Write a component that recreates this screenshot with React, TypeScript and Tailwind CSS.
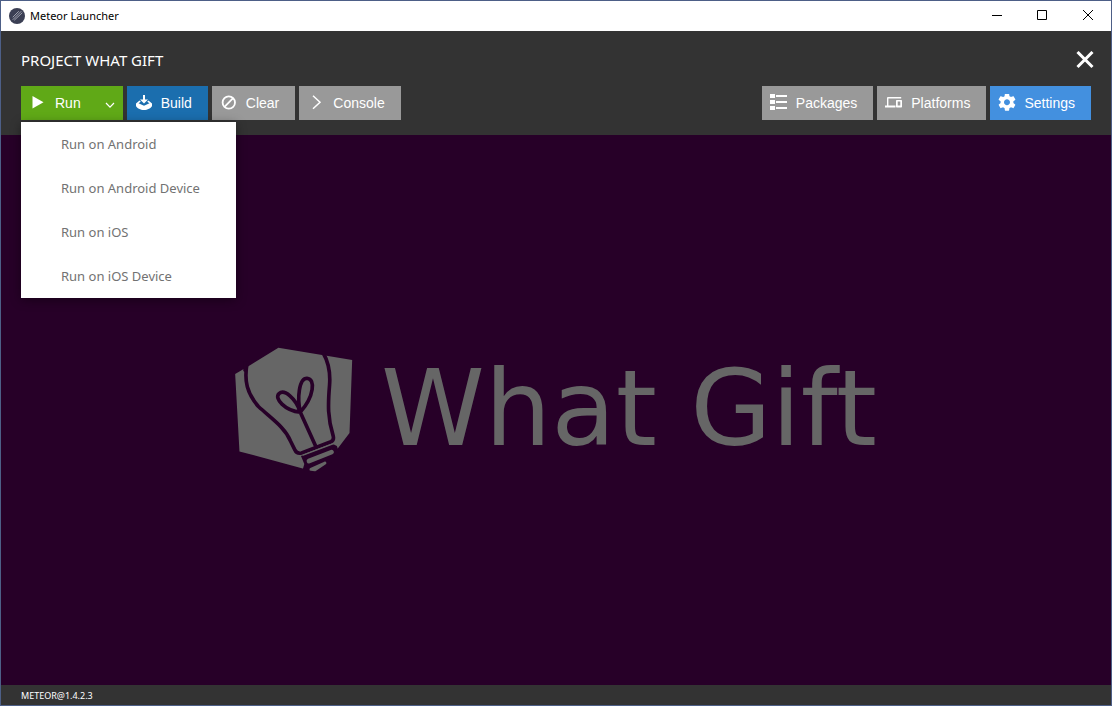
import type { ReactNode } from "react";

function MeteorIcon() {
  return (
    <svg className="size-4" viewBox="0 0 16 16" aria-hidden="true">
      <circle cx="8" cy="8" r="8" fill="#3b3f54" />
      <path d="M4 11.500 12 3.500M5.500 12 13 5M4 9 9.500 3.500" stroke="#a9abb8" strokeWidth=".9" strokeLinecap="round" />
    </svg>
  );
}

function PlayIcon() {
  return (
    <svg className="size-4.5" viewBox="0 0 18 18" fill="currentColor" aria-hidden="true">
      <path d="M3.500 2v12.500l11-6.200z" />
    </svg>
  );
}

function ChevronDownIcon() {
  return (
    <svg className="size-2.5" viewBox="0 0 10 10" fill="none" stroke="currentColor" strokeWidth="1.2" aria-hidden="true">
      <path d="M1 3 5 7.200 9 3" />
    </svg>
  );
}

function BuildIcon() {
  return (
    <svg className="size-4.5" viewBox="0 0 18 18" fill="currentColor" aria-hidden="true">
      <path d="M8 1h2v4.500h3L9 9.500l-4-4h3z" />
      <path d="M4.500 6.500 1 9.500v2.500c.8 2 4.500 4 8 4s7.200-2 8-4V9.500l-3.500-3-1.300 1.200 2.300 1.500L9 11.700 3.500 9.200l2.300-1.500z" />
    </svg>
  );
}

function ClearIcon() {
  return (
    <svg className="size-4.5" viewBox="0 0 18 18" fill="none" stroke="currentColor" strokeWidth="1.8" aria-hidden="true">
      <circle cx="8.800" cy="8.500" r="6.200" />
      <path d="M4.500 12.800 13.100 4.200" />
    </svg>
  );
}

function ConsoleIcon() {
  return (
    <svg className="size-4.5" viewBox="0 0 18 18" fill="none" stroke="currentColor" strokeWidth="1.500" aria-hidden="true">
      <path d="M6 1.700 13 8.200l-7 6.500" />
    </svg>
  );
}

function PackagesIcon() {
  return (
    <svg className="size-4.5" viewBox="0 0 18 18" fill="currentColor" aria-hidden="true">
      <path d="M0 0h5v4H0zM0 6h5v4H0zM0 12h5v4H0zM6 1h11v2H6zM6 7h11v2H6zM6 13h11v2H6z" />
    </svg>
  );
}

function PlatformsIcon() {
  return (
    <svg className="size-4.5" viewBox="0 0 18 18" fill="currentColor" aria-hidden="true">
      <path d="M3.400 4.500h12.800V3H3.200C2.400 3 2 3.500 2 4.200v7.300H0v2h10.500v-2H3.400z" />
      <path fillRule="evenodd" d="M11.700 6h4.600c.4 0 .7.300.7.700v6.100c0 .4-.3.700-.7.700h-4.600c-.4 0-.7-.3-.7-.7V6.700c0-.4.300-.7.700-.7zm1 1.500v4h2.600v-4z" />
    </svg>
  );
}

function SettingsIcon() {
  return (
    <svg className="size-4.5" viewBox="1.500 2.500 21 21" fill="currentColor" aria-hidden="true">
      <path d="M19.430 12.980c.04-.32.07-.64.07-.98s-.03-.66-.07-.98l2.110-1.650c.19-.15.24-.42.12-.64l-2-3.460c-.12-.22-.39-.3-.61-.22l-2.490 1c-.52-.4-1.080-.73-1.690-.98l-.38-2.650C14.460 2.180 14.250 2 14 2h-4c-.25 0-.46.18-.49.42l-.38 2.650c-.61.25-1.170.59-1.690.98l-2.490-1c-.23-.09-.49 0-.61.22l-2 3.460c-.13.22-.07.49.12.64l2.110 1.650c-.04.32-.07.65-.07.98s.03.66.07.98l-2.110 1.650c-.19.15-.24.42-.12.64l2 3.460c.12.22.39.3.61.22l2.490-1c.52.4 1.080.73 1.690.98l.38 2.650c.03.24.24.42.49.42h4c.25 0 .46-.18.49-.42l.38-2.650c.61-.25 1.170-.59 1.690-.98l2.490 1c.23.09.49 0 .61-.22l2-3.460c.12-.22.07-.49-.12-.64zM12 15.500c-1.930 0-3.500-1.570-3.500-3.500s1.570-3.500 3.500-3.500 3.500 1.570 3.500 3.500-1.570 3.500-3.500 3.500z" />
    </svg>
  );
}

function BulbLogo() {
  return (
    <svg className="h-[125px] w-[118px] shrink-0" viewBox="30 36 354 376" aria-hidden="true">
      <path d="M30 117 76 90 160 38 382 75 374 295 338 342 236 402 43 350z" fill="#666666" />
      <path d="M228 364 324 328 336 334 342 352 300 412H240L234 402 238 388z" fill="#270028" />
      <g fill="none" stroke="#270028" strokeWidth="11" strokeLinecap="round" strokeLinejoin="round">
        <path d="M66 84C56 138 66 176 100 215C140 252 180 278 196 318L210 346Q215 358 230 355L318 321Q328 316 325 304C308 250 309 210 314 150C317 110 312 84 295 54" />
        <path d="M272 334 226 232C216 190 222 130 246 130C272 132 268 184 226 232C180 228 146 190 162 176C178 162 212 190 226 232" />
        <path d="M60 84V106" />
      </g>
      <g fill="none" stroke="#666666" strokeLinecap="round" strokeLinejoin="round">
        <path d="M234 361 326 327" strokeWidth="4" />
        <path d="M252 379 320 352" strokeWidth="14" />
        <path d="M258 404 300 385 270 405z" fill="#666666" strokeWidth="9" />
      </g>
    </svg>
  );
}

type ToolButtonProps = {
  icon: ReactNode;
  label: string;
  color: string;
};

function ToolButton({ icon, label, color }: ToolButtonProps) {
  return (
    <button type="button" className={`flex h-[34px] items-center gap-2 pr-4 pl-2 font-['Liberation_Sans',sans-serif] text-sm text-white ${color}`}>
      {icon}
      {label}
    </button>
  );
}

const runTargets = ["Run on Android", "Run on Android Device", "Run on iOS", "Run on iOS Device"];

function RunMenu() {
  return (
    <div className="relative">
      <button
        type="button"
        aria-haspopup="menu"
        aria-expanded="true"
        className="flex h-[34px] items-center gap-2 bg-[#60a917] pr-2 pl-2 font-['Liberation_Sans',sans-serif] text-sm text-white"
      >
        <PlayIcon />
        Run
        <span className="mt-1 pl-4">
          <ChevronDownIcon />
        </span>
      </button>
      <ul role="menu" className="absolute top-9 left-0 z-10 w-[215px] bg-white shadow-[0_2px_10px_rgba(0,0,0,0.4)]">
        {runTargets.map((target) => (
          <li key={target} role="none">
            <button type="button" role="menuitem" className="block h-11 w-full pt-0.5 pl-10 text-left text-[13px] text-[#727272]">
              {target}
            </button>
          </li>
        ))}
      </ul>
    </div>
  );
}

function TitleBar() {
  return (
    <div className="flex h-[30px] items-center justify-between bg-white text-black">
      <div className="flex items-center gap-[5px] pl-2">
        <MeteorIcon />
        <span className="text-[11px]">Meteor Launcher</span>
      </div>
      <div className="flex h-full">
        <button type="button" aria-label="Minimize" className="flex w-[45px] items-center justify-center">
          <svg className="size-3" viewBox="0 0 12 12" stroke="currentColor" aria-hidden="true">
            <path d="M1 5.500h10" />
          </svg>
        </button>
        <button type="button" aria-label="Maximize" className="flex w-[46px] items-center justify-center">
          <svg className="size-3" viewBox="0 0 12 12" fill="none" stroke="currentColor" aria-hidden="true">
            <path d="M1.500 .5h9v9h-9z" />
          </svg>
        </button>
        <button type="button" aria-label="Close window" className="flex w-[46px] items-center justify-center">
          <svg className="size-3" viewBox="0 0 12 12" stroke="currentColor" aria-hidden="true">
            <path d="m1 0 10 10M11 0 1 10" />
          </svg>
        </button>
      </div>
    </div>
  );
}

export default function App() {
  return (
    <div className="flex min-h-screen flex-col border border-[#4d5f87] bg-[#270028] font-['Noto_Sans','Open_Sans',sans-serif]">
      <TitleBar />
      <header className="bg-[#333333] px-5 py-[15px]">
        <div className="flex h-7 items-center justify-between text-white">
          <h1 className="text-[15px]">PROJECT WHAT GIFT</h1>
          <button type="button" aria-label="Close project" className="-mr-1.5 flex size-6 items-center justify-center">
            <svg className="size-[18px]" viewBox="0 0 18 18" stroke="currentColor" strokeWidth="3" aria-hidden="true">
              <path d="m1.500 1 15 15M16.500 1l-15 15" />
            </svg>
          </button>
        </div>
        <div className="mt-3 flex justify-between">
          <div className="flex gap-1">
            <RunMenu />
            <ToolButton icon={<BuildIcon />} label="Build" color="bg-[#1b6eae]" />
            <ToolButton icon={<ClearIcon />} label="Clear" color="bg-[#999999]" />
            <ToolButton icon={<ConsoleIcon />} label="Console" color="bg-[#999999]" />
          </div>
          <div className="flex gap-1">
            <ToolButton icon={<PackagesIcon />} label="Packages" color="bg-[#999999]" />
            <ToolButton icon={<PlatformsIcon />} label="Platforms" color="bg-[#999999]" />
            <ToolButton icon={<SettingsIcon />} label="Settings" color="bg-[#4390df]" />
          </div>
        </div>
      </header>
      <main className="flex flex-1 items-center justify-center gap-7 pb-0.5">
        <BulbLogo />
        <p className="font-['DejaVu_Sans',sans-serif] text-[105px] leading-none whitespace-nowrap text-[#666666]">What Gift</p>
      </main>
      <footer className="flex h-5 items-center bg-[#333333] px-5 pt-px text-[9px] text-white">METEOR@1.4.2.3</footer>
    </div>
  );
}
